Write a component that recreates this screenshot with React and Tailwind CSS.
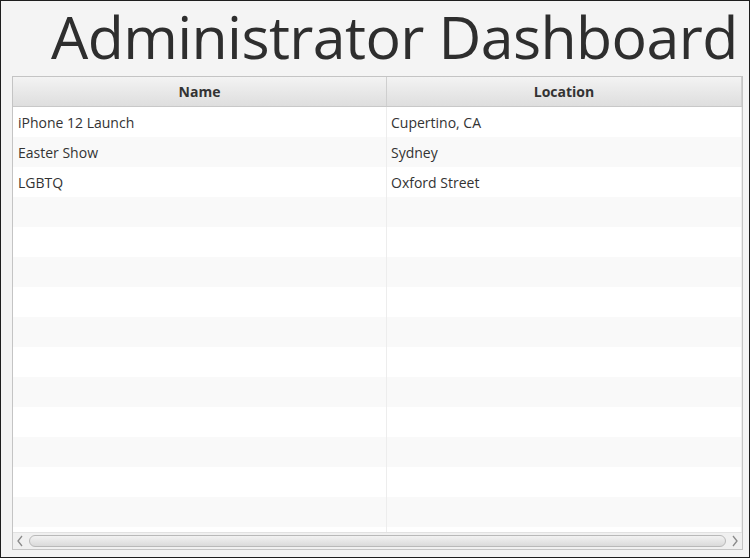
import React from 'react';

const events = [
  { name: 'iPhone 12 Launch', location: 'Cupertino, CA' },
  { name: 'Easter Show', location: 'Sydney' },
  { name: 'LGBTQ', location: 'Oxford Street' },
];

const EMPTY_ROWS = 12;

const Chevron = ({ dir }) => (
  <svg width="8" height="12" viewBox="0 0 8 12" className="text-[#8a8a8a]">
    {dir === 'left' ? (
      <path d="M6 1 L2 6 L6 11" fill="none" stroke="currentColor" strokeWidth="1.3" />
    ) : (
      <path d="M2 1 L6 6 L2 11" fill="none" stroke="currentColor" strokeWidth="1.3" />
    )}
  </svg>
);

const App = () => {
  const rows = [...events, ...Array.from({ length: EMPTY_ROWS }, () => null)];

  return (
    <div
      className="w-[750px] h-[558px] border border-[#1e1e1e] bg-[#f4f4f4] flex flex-col overflow-hidden text-[#333333]"
      style={{ fontFamily: '"Open Sans", "Noto Sans", sans-serif' }}
    >
      <div className="h-[75px] shrink-0 pl-[50px] whitespace-nowrap">
        <h1 className="text-[59px] leading-[70px] font-normal tracking-[-0.6px] text-[#2e2e2e]">
          Administrator Dashboard
        </h1>
      </div>

      <div className="ml-[11px] w-[731px] h-[474px] border border-[#c4c4c4] bg-white flex flex-col">
        {/* header */}
        <div className="h-[30px] shrink-0 flex border-b border-[#c8c8c8] bg-gradient-to-b from-[#f3f3f3] to-[#dedede] text-[14px] font-bold">
          <div className="w-[374px] flex items-center justify-center border-r border-[#cfcfcf]">Name</div>
          <div className="w-[355px] flex items-center justify-center border-r border-[#cfcfcf]">Location</div>
        </div>

        {/* body */}
        <div className="flex-1 overflow-hidden">
          {rows.map((row, i) => (
            <div
              key={i}
              className={`h-[30px] flex text-[14px] ${i % 2 === 0 ? 'bg-white' : 'bg-[#f9f9f9]'}`}
            >
              <div className="w-[374px] flex items-center pl-[5px] border-r border-[#ededed]">
                {row ? row.name : ''}
              </div>
              <div className="w-[355px] flex items-center pl-[4px] border-r border-[#ededed]">
                {row ? row.location : ''}
              </div>
            </div>
          ))}
        </div>

        {/* horizontal scrollbar */}
        <div className="h-[17px] shrink-0 flex items-center bg-[#f0f0f0] border-t border-[#e2e2e2] px-[2px] gap-[4px]">
          <div className="w-[10px] flex justify-center">
            <Chevron dir="left" />
          </div>
          <div className="flex-1 h-[12px] rounded-[6px] border border-[#b9b9b9] bg-gradient-to-b from-[#f2f2f2] to-[#dadada]" />
          <div className="w-[10px] flex justify-center">
            <Chevron dir="right" />
          </div>
        </div>
      </div>
    </div>
  );
};

export default App;
